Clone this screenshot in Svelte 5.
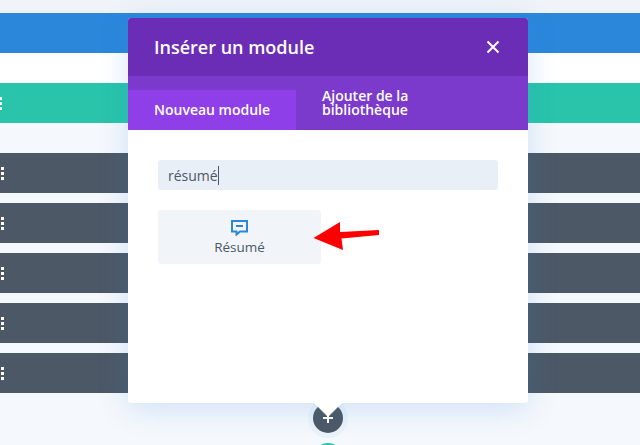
<script lang="ts">
    const rows = [0, 1, 2, 3, 4];
</script>

<div class="page">
    <div class="row blue"></div>
    <div class="row white"></div>
    <div class="row teal"><span class="dots clipped"><i></i><i></i><i></i></span></div>
    <div class="rows">
        {#each rows as r (r)}
            <div class="row dark"><span class="dots"><i></i><i></i><i></i></span></div>
        {/each}
    </div>

    <div class="add">
        <span class="plus"></span>
    </div>
    <div class="add-next"></div>

    <div class="modal">
        <div class="head">
            <h1>Insérer un module</h1>
            <svg class="close" width="14" height="14" viewBox="0 0 14 14">
                <path d="M1.500 1.500 L12.500 12.500 M12.500 1.500 L1.500 12.500" stroke="#fff" stroke-width="2" fill="none" />
            </svg>
        </div>
        <div class="tabs">
            <div class="tab active">Nouveau module</div>
            <div class="tab other">Ajouter de la bibliothèque</div>
        </div>
        <div class="body">
            <div class="search"><span>résumé</span><span class="caret"></span></div>
            <div class="grid">
                <div class="card">
                    <svg width="17" height="16" viewBox="0 0 17 16">
                        <path d="M1 1 H16 V11.500 H9 L5.500 14.500 V11.500 H1 Z" fill="none" stroke="#2b87da" stroke-width="2" />
                        <path d="M5 6 H12" stroke="#2b87da" stroke-width="2" />
                    </svg>
                    <span>Résumé</span>
                </div>
            </div>
        </div>
        <div class="notch"></div>
    </div>

    <svg class="arrow" width="70" height="32" viewBox="0 0 70 32">
        <path d="M0.500 17 L27 1 L27 11 L66 9 L66 14 L28.500 17.500 L30 29 Z" fill="#fe0000" />
    </svg>
</div>

<style>
    :global(body) {
        margin: 0;
        background: #f5f8fc;
    }

    .page {
        position: relative;
        width: 640px;
        height: 445px;
        overflow: hidden;
        padding-top: 13px;
        box-sizing: border-box;
        background: linear-gradient(#f0f3f8 0, #f0f3f8 13px, #f5f8fc 123px);
        font-family: "Open Sans", sans-serif;
    }

    .row {
        height: 40px;
        display: flex;
        align-items: center;
    }

    .blue {
        background: #2b87da;
    }

    .white {
        height: 30px;
        background: #fff;
    }

    .teal {
        background: #29c4a9;
    }

    .rows {
        display: flex;
        flex-direction: column;
        gap: 10px;
        margin-top: 30px;
    }

    .dark {
        background: #4c5866;
    }

    .dots {
        display: flex;
        flex-direction: column;
        gap: 2px;
        margin-left: 1px;
    }

    .dots.clipped {
        margin-left: -1px;
    }

    .dots i {
        display: block;
        width: 3px;
        height: 3px;
        background: #fff;
    }

    .add {
        position: absolute;
        left: 313px;
        top: 403px;
        width: 30px;
        height: 30px;
        border-radius: 50%;
        background: #4c5866;
        box-shadow: 0 0 0 5px rgba(43, 135, 218, 0.05);
    }

    .plus {
        position: absolute;
        left: 10px;
        top: 14px;
        width: 10px;
        height: 2px;
        background: #fff;
    }

    .plus::after {
        content: "";
        position: absolute;
        left: 4px;
        top: -4px;
        width: 2px;
        height: 10px;
        background: #fff;
    }

    .add-next {
        position: absolute;
        left: 313px;
        top: 443px;
        width: 30px;
        height: 30px;
        border-radius: 50%;
        background: #29c4a9;
    }

    .modal {
        position: absolute;
        left: 128px;
        top: 18px;
        width: 400px;
        height: 385px;
        display: flex;
        flex-direction: column;
        border-radius: 3px;
        background: #fff;
        box-shadow: 0 5px 30px rgba(43, 135, 218, 0.2);
    }

    .head {
        height: 58px;
        flex: none;
        display: flex;
        align-items: center;
        justify-content: space-between;
        padding: 0 28px 0 26px;
        border-radius: 3px 3px 0 0;
        background: #6b2db5;
        color: #fff;
    }

    h1 {
        margin: 0;
        font-size: 18px;
        font-weight: 600;
        line-height: 1;
    }

    .tabs {
        height: 54px;
        flex: none;
        display: flex;
        align-items: flex-end;
        background: #7b3acc;
        color: #fff;
        font-size: 14px;
        font-weight: 600;
    }

    .tab {
        box-sizing: border-box;
        height: 40px;
        display: flex;
        align-items: center;
        padding: 0 26px;
        line-height: 14px;
    }

    .tab.active {
        width: 168px;
        white-space: nowrap;
        background: #8e3fe8;
    }

    .tab.other {
        width: 150px;
        margin-bottom: 7px;
    }

    .body {
        padding: 30px;
    }

    .search {
        height: 30px;
        display: flex;
        align-items: center;
        padding: 0 10px;
        border-radius: 3px;
        background: #e9eff7;
        color: #4c5866;
        font-size: 14px;
        font-weight: 500;
    }

    .caret {
        width: 1px;
        height: 19px;
        background: #4c5866;
    }

    .grid {
        display: grid;
        grid-template-columns: 163px;
        margin-top: 20px;
    }

    .card {
        height: 54px;
        display: flex;
        flex-direction: column;
        align-items: center;
        justify-content: center;
        gap: 3px;
        border-radius: 3px;
        background: #f1f5f9;
        color: #4c5866;
        font-size: 13.500px;
        font-weight: 500;
        line-height: 16px;
    }

    .card svg {
        display: block;
    }

    .notch {
        position: absolute;
        left: 186px;
        top: 385px;
        width: 0;
        height: 0;
        border-left: 14px solid transparent;
        border-right: 14px solid transparent;
        border-top: 14px solid #fff;
    }

    .arrow {
        position: absolute;
        left: 313px;
        top: 221px;
    }
</style>
